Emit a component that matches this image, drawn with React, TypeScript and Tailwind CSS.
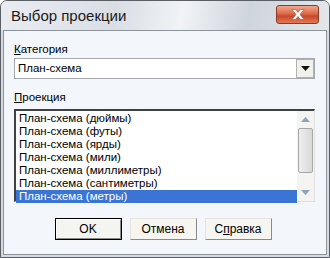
const items = [
    "План-схема (дюймы)",
    "План-схема (футы)",
    "План-схема (ярды)",
    "План-схема (мили)",
    "План-схема (миллиметры)",
    "План-схема (сантиметры)",
    "План-схема (метры)",
];

const ui = "font-['Liberation_Sans',Arial,sans-serif]";

function DlgButton(props: { children: React.ReactNode; primary?: boolean }) {
    if (props.primary) {
        return (
            <div className="w-[67px] h-[22px] border border-black">
                <div className="h-full border-t border-l border-b border-r border-t-white border-l-white border-b-[#8a8a8a] border-r-[#8a8a8a] bg-[#f4f4f0] flex items-center justify-center text-[12px] text-black">
                    {props.children}
                </div>
            </div>
        );
    }
    return (
        <div className="w-[67px] h-[22px] border border-t-[#e4e3dc] border-l-[#e4e3dc] border-b-[#8a8a8a] border-r-[#8a8a8a] bg-[#f6f5ef] flex items-center justify-center text-[12px] text-black">
            {props.children}
        </div>
    );
}

function Tri(props: { up?: boolean; color: string }) {
    return (
        <svg width="9" height="5" viewBox="0 0 9 5">
            <path
                d={props.up ? "M4.5 0 L9 5 L0 5 Z" : "M0 0 L9 0 L4.5 5 Z"}
                fill={props.color}
            />
        </svg>
    );
}

export default function App() {
    return (
        <div className={`w-[330px] h-[258px] ${ui} bg-white`}>
            <div className="w-full h-full flex flex-col rounded-t-[7px] border border-[#5a5f66] bg-[#d6dbe2] overflow-hidden">
                {/* title bar */}
                <div className="h-[29px] shrink-0 flex items-center justify-between pl-[10px] pr-[10px] bg-[linear-gradient(100deg,#e9edf2_0%,#d9dee5_35%,#f1f3f6_55%,#cfd5dc_75%,#e3e7ec_100%)]">
                    <span className="text-[15px] text-[#1a1a1a] mt-[2px]">Выбор проекции</span>
                    <div className="w-[43px] h-[19px] mb-[2px] rounded-[3px] border border-[#8a3a26] bg-[linear-gradient(180deg,#f0a88e_0%,#dc6a48_45%,#c8472a_60%,#e07a55_100%)] flex items-center justify-center">
                        <svg width="14" height="11" viewBox="0 0 14 11">
                            <path
                                d="M1 0.5 H4.5 L7 3.5 L9.5 0.5 H13 L9 5.5 L13 10.5 H9.5 L7 7.5 L4.5 10.5 H1 L5 5.5 Z"
                                fill="#ffffff"
                                stroke="#9a5644"
                                strokeWidth="0.6"
                            />
                        </svg>
                    </div>
                </div>
                {/* content */}
                <div className="flex-1 mx-[2px] mb-[2px] border border-[#8d939b] bg-[#f3f6fb] flex flex-col pl-[10px] pr-[11px] text-[11.5px] text-black">
                    <div className="mt-[12px] h-[13px] leading-[13px]">
                        <span className="underline">К</span>атегория
                    </div>
                    <div className="mt-[2px] h-[21px] border border-[#a5a9ae] bg-white flex items-center">
                        <span className="flex-1 pl-[3px]">План-схема</span>
                        <div className="w-[18px] h-[19px] border border-[#b0b2b0] bg-[#f1f1ec] flex items-center justify-center">
                            <Tri color="#111" />
                        </div>
                    </div>
                    <div className="mt-[12px] h-[13px] leading-[13px]">
                        <span className="underline">П</span>роекция
                    </div>
                    <div className="mt-[5px] h-[93px] flex border-t-2 border-l-2 border-t-[#404040] border-l-[#404040] border-b border-r border-b-[#e0e0e0] border-r-[#e0e0e0] bg-white">
                        <div className="flex-1 flex flex-col pt-[1px]">
                            {items.map((it, i) => (
                                <div
                                    key={it}
                                    className={
                                        "h-[13px] leading-[13px] pl-[3px] " +
                                        (i === items.length - 1 ? "bg-[#3a75d6] text-white" : "")
                                    }
                                >
                                    {it}
                                </div>
                            ))}
                        </div>
                        <div className="w-[17px] flex flex-col bg-[#f4f4f2]">
                            <div className="h-[17px] flex items-center justify-center">
                                <Tri up color="#8fa3bd" />
                            </div>
                            <div className="h-[45px] mx-[1px] rounded-[2px] border border-[#a7a7a7] bg-[linear-gradient(90deg,#eeeeee,#d9d9d9)]" />
                            <div className="flex-1" />
                            <div className="h-[17px] flex items-center justify-center">
                                <Tri color="#8fa3bd" />
                            </div>
                        </div>
                    </div>
                    <div className="mt-[16px] flex justify-center gap-[8px] pr-[3px] text-[11.5px]">
                        <DlgButton primary>OK</DlgButton>
                        <DlgButton>Отмена</DlgButton>
                        <DlgButton>
                            <span>
                                С<span className="underline">п</span>равка
                            </span>
                        </DlgButton>
                    </div>
                </div>
            </div>
        </div>
    );
}
